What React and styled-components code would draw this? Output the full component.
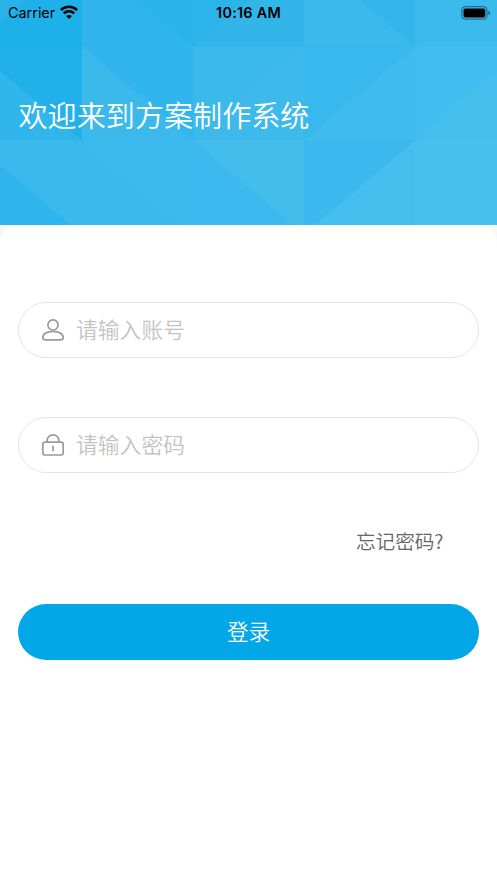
import React, {useState} from 'react';
import styled, {createGlobalStyle} from 'styled-components';

const GlobalStyle = createGlobalStyle`
  * {
    box-sizing: border-box;
  }

  body {
    margin: 0;
    background: #fff;
    font-family: "Noto Sans CJK SC", sans-serif;
  }
`

const COL = 111;
const ROW = 94;

// dir: which way the cell is cut, a: left part, b: right part
const tiles = [
  [
    {dir: '/',  a: '#2ab3eb', b: '#1eb0e9'},
    {dir: '\\', a: '#2fb5ec', b: '#28b3ea'},
    {dir: '/',  a: '#2ab4ea', b: '#32b6ea'},
    {dir: '\\', a: '#39b9ec', b: '#33b7eb'},
    {dir: '/',  a: '#3abaed', b: '#3abaed'},
  ],
  [
    {dir: '\\', a: '#31b6ec', b: '#22b0ea'},
    {dir: '\\', a: '#3cb9eb', b: '#31b5ee'},
    {dir: '/',  a: '#3bb9eb', b: '#3dbaeb'},
    {dir: '/',  a: '#37b9ed', b: '#3fbbed'},
    {dir: '/',  a: '#43bdef', b: '#47bfee'},
  ],
  [
    {dir: '\\', a: '#2fb5ee', b: '#3cb9ec'},
    {dir: '\\', a: '#3bb9ec', b: '#3dbaed'},
    {dir: '\\', a: '#3cb9ee', b: '#44bded'},
    {dir: '/',  a: '#3bb9ee', b: '#47bfee'},
    {dir: '/',  a: '#49c0ef', b: '#49c0ef'},
  ],
];

const Screen = styled.div`
  display: flex;
  flex-direction: column;
  width: 100%;
  max-width: 497px;
  height: 883px;
  background: #f7f7f7;
  overflow: hidden;
`

const Header = styled.header`
  position: relative;
  flex: none;
  height: 224.5px;
  background: #3abaed;
  overflow: hidden;
`

const Pattern = styled.svg`
  position: absolute;
  top: 0;
  left: 0;
`

const StatusBar = styled.div`
  position: relative;
  display: grid;
  grid-template-columns: 1fr auto 1fr;
  align-items: center;
  height: 25px;
  padding: 0 6px 0 8px;
  color: #000;
  font-family: Inter, sans-serif;
  font-size: 14.4px;
  line-height: 18px;
`

const Carrier = styled.div`
  display: flex;
  align-items: center;
  gap: 5px;
`

const Clock = styled.div`
  margin-right: 2px;
  font-weight: 600;
  letter-spacing: 0.25px;
`

const Battery = styled.svg`
  justify-self: end;
`

const Title = styled.h1`
  position: relative;
  margin: 68px 0 0 18.5px;
  color: #fff;
  font-size: 29.1px;
  font-weight: 350;
  line-height: 42px;
  white-space: nowrap;
`

const Panel = styled.form`
  display: flex;
  flex: 1;
  flex-direction: column;
  padding: 77.5px 18px 0;
  background: #fff;
  border-radius: 18px 18px 0 0;
`

const Field = styled.label`
  display: flex;
  align-items: center;
  gap: 11px;
  height: 56px;
  margin-bottom: 59px;
  padding: 0 22px;
  border: 1px solid #e5e5e5;
  border-radius: 28px;
`

const Input = styled.input`
  flex: 1;
  min-width: 0;
  height: 40px;
  padding: 0 0 3px;
  border: none;
  outline: none;
  background: transparent;
  color: #333;
  font-family: "Noto Sans CJK SC", sans-serif;
  font-size: 21.8px;
  font-weight: 350;

  &::placeholder {
    color: #c3c3c3;
    opacity: 1;
  }
`

const Forgot = styled.a`
  align-self: flex-end;
  margin: -6px 35.5px 1px 0;
  color: #666;
  font-size: 19.6px;
  font-weight: 350;
  line-height: 30px;
`

const LoginButton = styled.button`
  height: 55.5px;
  margin-top: 47px;
  padding: 0 0 2px;
  border: none;
  border-radius: 28px;
  background: #02a7e8;
  color: #fff;
  font-family: "Noto Sans CJK SC", sans-serif;
  font-size: 21.6px;
  font-weight: 350;
`

function renderTile(tile, row, col) {
  const x1 = 82 + (col - 1)*COL;
  const y1 = 46.5 + (row - 1)*ROW;
  const x2 = x1 + COL;
  const y2 = y1 + ROW;
  const corner = tile.dir === '/'
    ? `${x2},${y1} ${x2},${y2} ${x1},${y2}`
    : `${x1},${y1} ${x2},${y1} ${x2},${y2}`;
  return (
    <g key={`${row}-${col}`}>
      <rect x={x1} y={y1} width={COL + 0.5} height={ROW + 0.5} fill={tile.a} />
      <polygon points={corner} fill={tile.b} />
    </g>
  );
}

function WifiIcon() {
  return (
    <svg width="18" height="15" viewBox="0 0 18 15" fill="none" stroke="#000" strokeWidth="2.6">
      <path d="M0.9 5C5.4 0.6 12.6 0.6 17.1 5" />
      <path d="M3.8 8.4C6.8 5.6 11.2 5.6 14.2 8.4" />
      <path d="M9 13.9L6.2 11C7.7 9.5 10.3 9.5 11.8 11Z" fill="#000" stroke="none" />
    </svg>
  );
}

function UserIcon() {
  return (
    <svg width="24" height="24" viewBox="0 0 24 24" fill="none" stroke="#999" strokeWidth="1.7">
      <circle cx="12" cy="6.9" r="5.1" />
      <path d="M12 13.3C6.2 13.3 1.8 16 1.8 19.5C1.8 21.3 2.9 21.9 4.8 21.9H19.2C21.1 21.9 22.2 21.3 22.2 19.5C22.2 16 17.8 13.3 12 13.3Z" />
    </svg>
  );
}

function LockIcon() {
  return (
    <svg width="24" height="24" viewBox="0 0 24 24" fill="none" stroke="#999" strokeWidth="1.7">
      <rect x="1.8" y="9.2" width="20.4" height="12.8" rx="2.2" />
      <path d="M6.2 9V7.2C6.2 4 8.7 1.8 12 1.8S17.8 4 17.8 7.2V9" />
      <path d="M12 12.8V18.2" />
    </svg>
  );
}

export default function App() {
  const [account, setAccount] = useState('');
  const [password, setPassword] = useState('');

  return (
    <Screen>
      <GlobalStyle />
      <Header>
        <Pattern width="497" height="225">
          {tiles.map((line, row) => line.map((tile, col) => renderTile(tile, row, col)))}
        </Pattern>
        <StatusBar>
          <Carrier>
            Carrier
            <WifiIcon />
          </Carrier>
          <Clock>10:16 AM</Clock>
          <Battery width="30" height="14" viewBox="0 0 30 14">
            <rect x="0.8" y="0.7" width="25.2" height="12.4" rx="3.4" fill="none" stroke="#000" strokeOpacity="0.5" />
            <rect x="2.5" y="2.4" width="21.8" height="9" rx="1.8" />
            <path d="M27.5 4.8C29.5 5.5 29.5 8.4 27.5 9.1Z" fillOpacity="0.55" />
          </Battery>
        </StatusBar>
        <Title>欢迎来到方案制作系统</Title>
      </Header>
      <Panel onSubmit={e => e.preventDefault()}>
        <Field>
          <UserIcon />
          <Input placeholder="请输入账号" value={account} onChange={e => setAccount(e.target.value)} />
        </Field>
        <Field>
          <LockIcon />
          <Input
            type="password"
            placeholder="请输入密码"
            value={password}
            onChange={e => setPassword(e.target.value)}
          />
        </Field>
        <Forgot>忘记密码?</Forgot>
        <LoginButton>登录</LoginButton>
      </Panel>
    </Screen>
  );
}
